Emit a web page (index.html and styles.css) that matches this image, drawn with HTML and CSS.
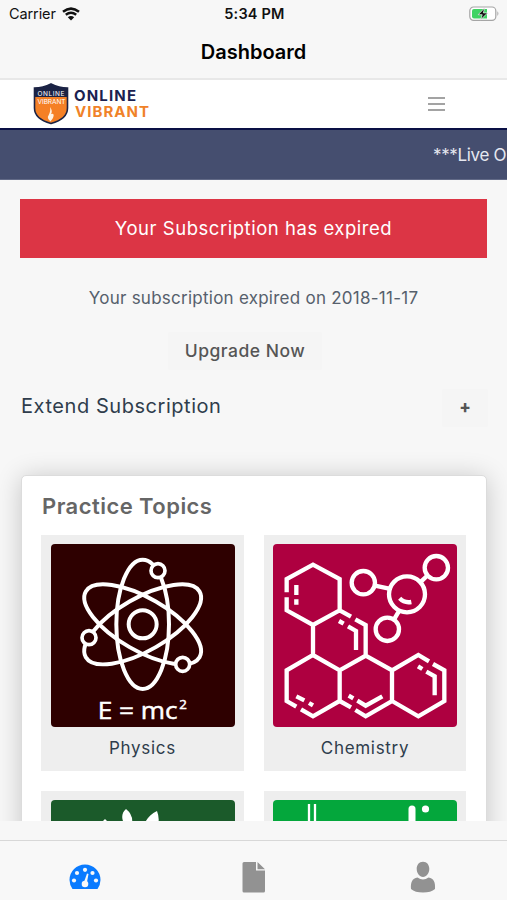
FILE: index.html
```html
<!DOCTYPE html>
<html lang="en">
<head>
<meta charset="utf-8">
<title>Dashboard</title>
<link rel="stylesheet" href="styles.css">
</head>
<body>
<div class="screen">
  <div class="statusbar">
    <div class="carrier">
      <span>Carrier</span>
      <svg width="18" height="14" viewBox="0 0 18 14"><path d="M1 4.8Q9-1.6 17 4.8M3.8 7.8Q9 3.8 14.2 7.8" fill="none" stroke="#111" stroke-width="2.5"/><path d="M5.8 10.2Q9 7.8 12.2 10.2L9 13.6Z" fill="#111"/></svg>
    </div>
    <div class="clock">5:34 PM</div>
    <div class="battery">
      <svg width="31" height="16" viewBox="0 0 31 16"><rect x=".8" y="1" width="26" height="13.4" rx="3.8" fill="#fff" stroke="#a5a5a5" stroke-width="1.2"/><path d="M5 3H18V12.5H5Q3 12.5 3 10.500V5Q3 3 5 3Z" fill="#3fd363"/><path d="M28.400 5.300Q30.400 7.500 28.400 10Z" fill="#a5a5a5"/><path d="M15.600 2 9.200 8.700H13.200L11.800 13.600 18.600 6.900H14.400Z" fill="#111" stroke="#f7f7f7" stroke-width=".7"/></svg>
    </div>
  </div>
  <h1>Dashboard</h1>

  <div class="header">
    <svg class="logo" width="118" height="42" viewBox="0 0 118 42">
      <path d="M1.500 5Q10 5 18 1Q26 5 34.500 5V25Q34.500 36 18 40.500Q1.500 36 1.500 25Z" fill="#f58025" stroke="#1b2345" stroke-width="1.600"/>
      <path d="M1.500 5Q10 5 18 1Q26 5 34.500 5V14H1.500Z" fill="#1b2345"/>
      <text class="crest" x="4.500" y="12.500" textLength="27">ONLINE</text>
      <text class="crest" x="4.500" y="21" textLength="28">VIBRANT</text>
      <path d="M17 24Q20 28 18 31Q22 30 20 35L17.500 38.500Q13.500 35 15.500 32.500Q18 28 17 24Z" fill="#fff3e4"/>
      <text class="brand" x="41" y="17.500" textLength="62">ONLINE</text>
      <text class="brand orange" x="42" y="34" textLength="74">VIBRANT</text>
    </svg>
    <div class="menu"><i></i><i></i><i></i></div>
  </div>

  <div class="ticker">***Live O</div>

  <div class="content">
    <div class="alert">Your Subscription has expired</div>
    <p class="expired">Your subscription expired on 2018-11-17</p>
    <div class="upgrade"><button>Upgrade Now</button></div>
    <div class="extend">
      <h2>Extend Subscription</h2>
      <button class="plus">+</button>
    </div>

    <div class="card">
      <h3>Practice Topics</h3>
      <div class="topics">
        <div class="topic">
          <svg class="physics" viewBox="33 27 552 549">
            <g fill="none" stroke="#fff" stroke-width="12">
              <ellipse cx="308" cy="268" rx="79" ry="194"/>
              <ellipse cx="308" cy="268" rx="79" ry="197" transform="rotate(60 308 268)"/>
              <ellipse cx="308" cy="268" rx="79" ry="197" transform="rotate(-60 308 268)"/>
              <circle cx="308" cy="268" r="42"/>
            </g>
            <g fill="#2e0000" stroke="#fff" stroke-width="11">
              <circle cx="354" cy="107" r="21"/>
              <circle cx="147" cy="308" r="21"/>
              <circle cx="428" cy="388" r="21"/>
            </g>
            <text x="173" y="552" font-size="73" textLength="240" lengthAdjust="spacingAndGlyphs">E = mc</text>
            <text x="418" y="522" font-size="40">2</text>
          </svg>
          <span>Physics</span>
        </div>
        <div class="topic">
          <svg class="chemistry" viewBox="40 27 552 549">
            <g fill="none" stroke="#fff" stroke-width="13">
              <path d="M81 172V132L160 89 240 132V226L160 270 81 226V187M160 270V360M240 226 274 245M287 253 318 270V362L240 406 160 360 81 406V498L110 515M124 523 160 544 240 498V406M240 498 274 517M287 525 318 544 397 498V406L318 362M397 406 476 360 508 379M520 387 554 406V498L476 544 397 498"/>
              <path d="M110 150V180M110 193V209M238 258 252 266M265 274 289 288V345M110 484 134 496M148 504 160 511M267 482 281 490M293 497 318 512 368 484M475 394 488 402M500 410 525 424V481M420 190Q434 205 455 201M346 152 388 161M484 140 505 120M417 230 405 250"/>
              <circle cx="311" cy="143" r="35"/>
              <circle cx="442" cy="178" r="54"/>
              <circle cx="530" cy="98" r="35"/>
              <circle cx="383" cy="283" r="35"/>
            </g>
          </svg>
          <span>Chemistry</span>
        </div>
        <div class="topic">
          <svg class="biology" viewBox="0 0 184 183"><path d="M75 9C69 14 70 23 79 30Q85 17 75 9ZM106 11C94 17 89 29 97 34Q112 27 106 11ZM54 19 60 25H48Z" fill="#fff"/></svg>
        </div>
        <div class="topic">
          <svg class="maths" viewBox="0 0 184 183"><path d="M36 4V60M42 4V60" stroke="#fff" stroke-width="2.300"/><path d="M139 9V60" stroke="#fff" stroke-width="7" stroke-linecap="round"/><circle cx="152.500" cy="9" r="3.600" fill="#fff"/></svg>
        </div>
      </div>
    </div>
  </div>

  <div class="tabbar">
    <a><svg width="32" height="26" viewBox="0 0 32 26"><path d="M3.500 25Q.5 20.500.5 16A15.500 15.500 0 0 1 31.500 16Q31.500 20.500 28.500 25Z" fill="#0a7bff"/><g fill="#f8f8f8"><circle cx="5" cy="16.500" r="2.100"/><circle cx="8" cy="9" r="2.100"/><circle cx="16" cy="5.800" r="2.100"/><circle cx="23.500" cy="9" r="2.100"/><circle cx="27" cy="16.500" r="2.100"/><circle cx="16" cy="20" r="3.300"/><path d="M15 18 18 9.500 19.500 10 17.800 19Z"/></g></svg></a>
    <a><svg width="24" height="32" viewBox="0 0 24 32"><path d="M2 1H14V9.500H23V30Q23 31.500 21.500 31.500H2Q.5 31.500.5 30V2.500Q.5 1 2 1ZM15.500 1 23 8.300H15.500Z" fill="#929292"/></svg></a>
    <a><svg width="26" height="32" viewBox="0 0 26 32"><path d="M13 .8C17 .8 19.300 4 19.300 8S16.500 16 13 16 6.700 12 6.700 8 9 .8 13 .8ZM7.500 16.500Q13 20.500 18.500 16.500C24 17 25.500 22 25 28Q21 31.500 13 31.500T1 28C.5 22 2 17 7.500 16.500Z" fill="#929292"/></svg></a>
  </div>
</div>
</body>
</html>
```
FILE: styles.css
```css
* { box-sizing: border-box; }
body {
	margin: 0;
	background: #f7f7f7;
	color: #2f3d4c;
	font-family: Inter, "Liberation Sans", sans-serif;
}
.screen {
	display: flex;
	flex-direction: column;
	height: 900px;
	overflow: hidden;
}
.statusbar {
	display: grid;
	grid-template-columns: 1fr 1fr 1fr;
	align-items: center;
	height: 27px;
	flex: none;
	padding: 0 7px 0 9px;
	color: #111;
	font-size: 14.5px;
}
.carrier {
	display: flex;
	align-items: center;
	gap: 6px;
}
.carrier span { letter-spacing: -.1px; }
.clock {
	text-align: center;
	font-weight: 600;
	letter-spacing: .2px;
}
.battery {
	display: flex;
	justify-content: flex-end;
}
h1 {
	flex: none;
	height: 53px;
	margin: 0;
	border-bottom: 2px solid #e8e8e8;
	color: #000;
	font-size: 20px;
	font-weight: 600;
	line-height: 51px;
	text-align: center;
}
.header {
	display: flex;
	justify-content: space-between;
	align-items: center;
	flex: none;
	height: 50px;
	padding: 0 62px 0 33px;
	background: #fff;
	border-bottom: 2px solid #0a1045;
}
.crest {
	fill: #fff;
	font-size: 6.5px;
}
.brand {
	fill: #1b2150;
	font-size: 15px;
	font-weight: 700;
}
.orange { fill: #f08228; }
.menu {
	display: flex;
	flex-direction: column;
	gap: 4px;
	width: 17px;
}
.menu i {
	height: 2px;
	background: #a3a3a3;
}
.ticker {
	flex: none;
	height: 50px;
	padding-left: 433px;
	overflow: hidden;
	background: #454e6f;
	border-bottom: 1px solid #626a87;
	color: #e6e8f0;
	font-size: 17px;
	line-height: 50px;
	letter-spacing: -.35px;
	white-space: nowrap;
}
.content {
	height: 641px;
	flex: none;
	padding: 19px 20px 0;
	overflow: hidden;
}
.alert {
	height: 59px;
	background: #dc3545;
	color: #fff;
	font-size: 18.5px;
	line-height: 58px;
	text-align: center;
	letter-spacing: .53px;
}
.expired {
	height: 26px;
	margin: 27px 0 21px;
	color: #56606c;
	font-size: 17px;
	line-height: 26px;
	text-align: center;
	letter-spacing: .25px;
}
button {
	padding: 0;
	border: 0;
	border-radius: 3px;
	background: #f5f5f5;
	color: #555;
	font-family: inherit;
}
.upgrade {
	height: 38px;
	padding-left: 148px;
}
.upgrade button {
	width: 154px;
	height: 38px;
	padding-bottom: 2px;
	font-size: 17.5px;
	font-weight: 500;
	letter-spacing: .5px;
}
.extend {
	display: flex;
	justify-content: space-between;
	align-items: center;
	height: 38px;
	margin-top: 19px;
}
h2 {
	margin: 0 0 4px 1px;
	font-size: 20px;
	font-weight: 400;
	letter-spacing: .55px;
}
.plus {
	width: 46px;
	height: 38px;
	margin-right: -1px;
	padding-bottom: 2px;
	font-size: 17px;
	font-weight: 800;
}
.card {
	height: 560px;
	margin: 48px 0 0 1px;
	padding: 17px 20px;
	background: #fff;
	border: 1px solid #dcdcdc;
	border-radius: 5px;
	box-shadow: 0 2px 26px rgba(0,0,0,.2);
}
h3 {
	height: 27px;
	margin: 0 0 15px;
	color: #666;
	font-size: 22px;
	font-weight: 600;
	line-height: 26px;
	letter-spacing: .45px;
}
.topics {
	display: grid;
	grid-template-columns: 203px 202px;
	gap: 20px;
	margin-left: -1px;
}
.topic {
	height: 236px;
	padding-top: 9px;
	background: #eee;
	text-align: center;
}
.topic svg {
	display: block;
	width: 184px;
	height: 183px;
	margin: 0 auto;
	border-radius: 4px;
}
.topic svg text {
	fill: #fff;
	stroke: #fff;
	stroke-width: 1.5px;
	font-family: "Open Sans", sans-serif;
}
.topic span {
	display: block;
	font-size: 17px;
	line-height: 42px;
	letter-spacing: .7px;
}
.physics { background: #2e0000; }
.chemistry { background: #ae0040; }
.biology { background: #1b5a2a; }
.maths { background: #04a73c; }
.tabbar {
	display: grid;
	grid-template-columns: 1fr 1fr 1fr;
	align-items: center;
	height: 60px;
	flex: none;
	margin-top: 19px;
	padding-top: 13px;
	background: #f8f8f8;
	border-top: 1px solid #d8d8d8;
}
.tabbar a {
	display: flex;
	justify-content: center;
}
```
